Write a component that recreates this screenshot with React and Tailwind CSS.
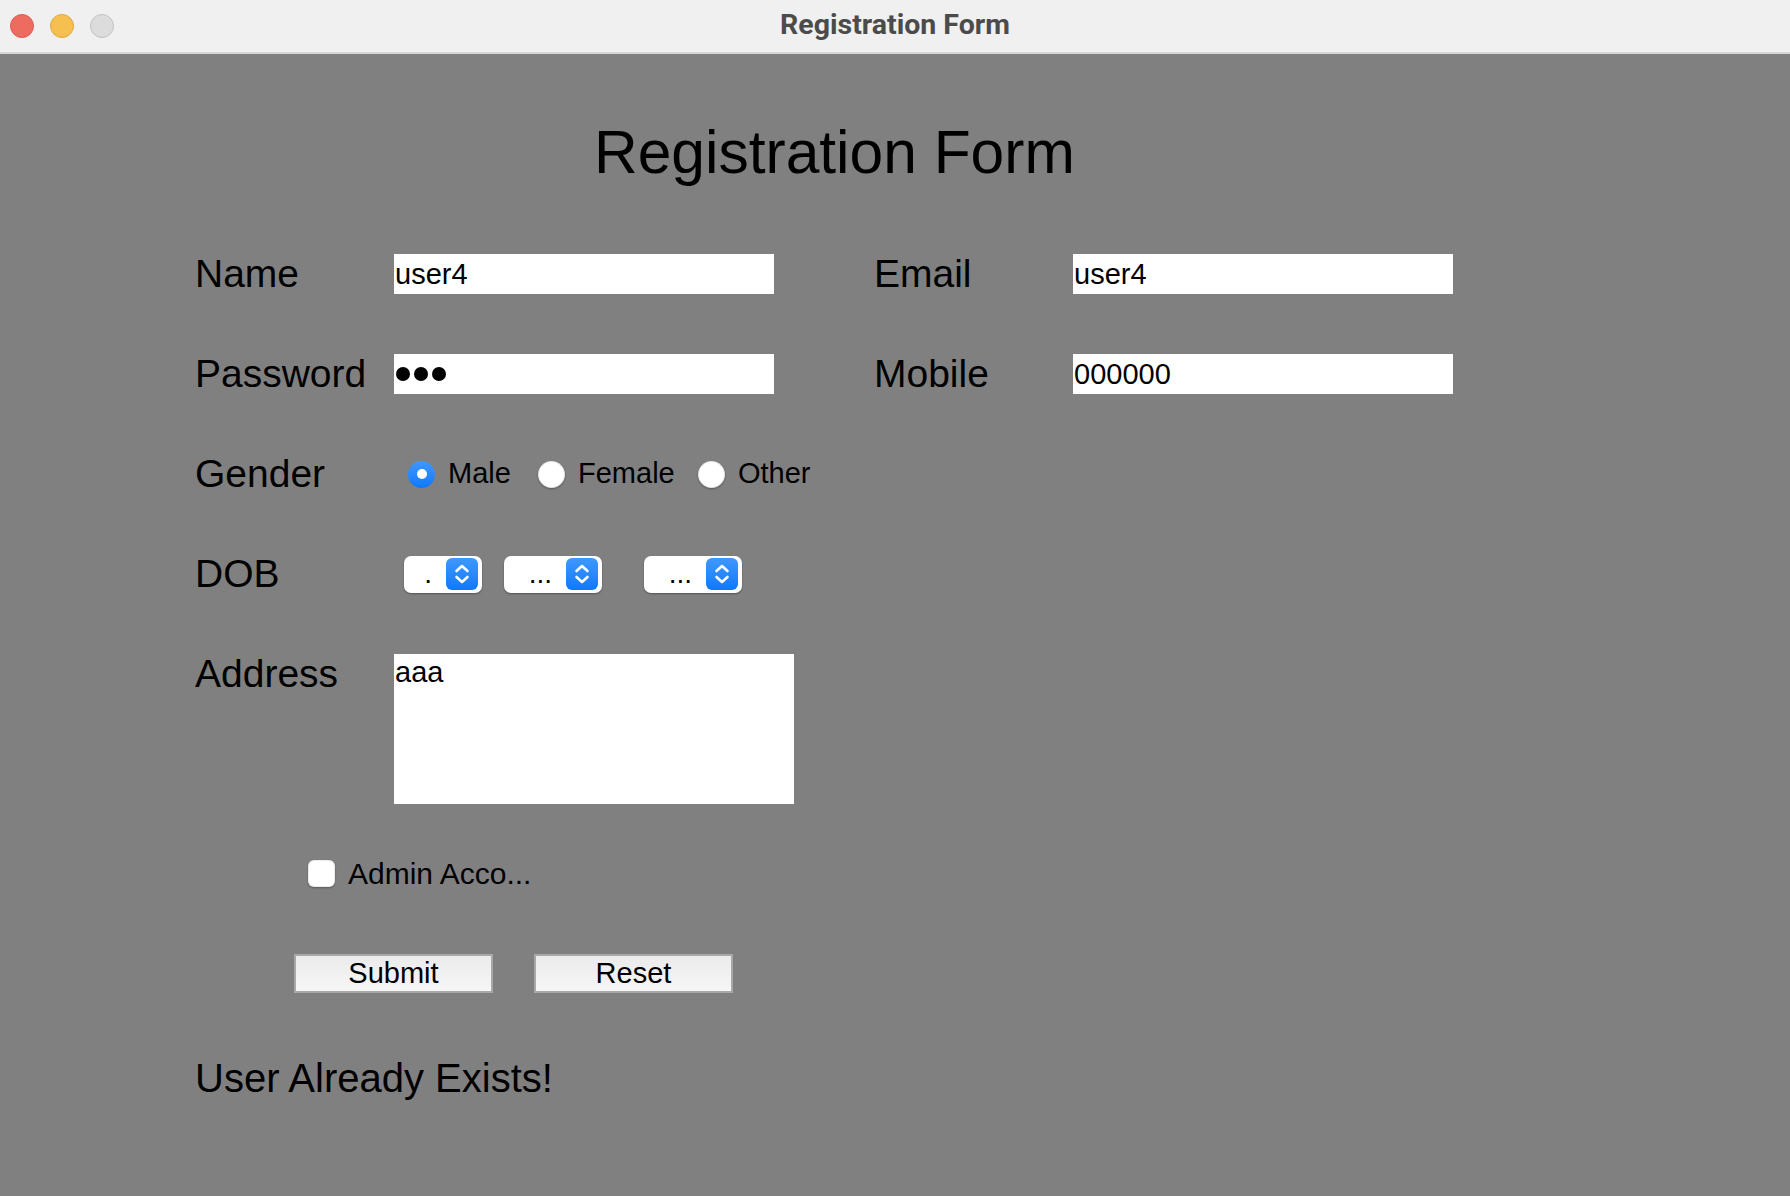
import React from "react";

const Label = ({ children }) => (
  <div className="w-[199px] shrink-0 text-[39px] leading-[40px]">{children}</div>
);

const TextBox = ({ children }) => (
  <div className="flex h-[40px] w-[380px] items-center bg-white pl-[1px] text-[29px] leading-[40px]">
    {children}
  </div>
);

const Radio = ({ checked }) =>
  checked ? (
    <span className="flex h-[27px] w-[27px] items-center justify-center rounded-full bg-linear-to-b from-[#3f98ff] to-[#0a78fd]">
      <span className="h-[10px] w-[10px] rounded-full bg-white" />
    </span>
  ) : (
    <span className="h-[27px] w-[27px] rounded-full bg-white shadow-[inset_0_0_0_1px_rgba(0,0,0,0.1),0_1px_2px_rgba(0,0,0,0.35)]" />
  );

const Stepper = () => (
  <div className="flex h-[32px] w-[32px] items-center justify-center rounded-[6px] bg-linear-to-b from-[#3f98ff] to-[#0b79fd]">
    <svg width="32" height="32" viewBox="0 0 32 32" fill="none">
      <path d="M10.5 13 L16 8 L21.5 13" stroke="white" strokeWidth="2.6" strokeLinecap="round" strokeLinejoin="round" />
      <path d="M10.5 19 L16 24 L21.5 19" stroke="white" strokeWidth="2.6" strokeLinecap="round" strokeLinejoin="round" />
    </svg>
  </div>
);

const Select = ({ width, text }) => (
  <div className={`flex h-[37px] ${width} items-center justify-end rounded-[7px] bg-white pr-[4px] shadow-[0_1px_2px_rgba(0,0,0,0.35)]`}>
    <span className="mr-[14px] text-[28px] leading-none">{text}</span>
    <Stepper />
  </div>
);

export default function App() {
  return (
    <div className="min-h-[1196px] w-full bg-[#808080] font-['Liberation_Sans',Arial,sans-serif] text-black">
      <div className="relative flex h-[54px] items-center justify-center border-b-2 border-[#d6d6d6] bg-[#eff0ef] pb-[2px]">
        <div className="absolute left-[10px] top-[14px] flex gap-[16px]">
          <span className="h-[24px] w-[24px] rounded-full border border-[#de5a50] bg-[#ee6b60]" />
          <span className="h-[24px] w-[24px] rounded-full border border-[#dfa73f] bg-[#f5c050]" />
          <span className="h-[24px] w-[24px] rounded-full border border-[#c2c2c2] bg-[#dcdcdc]" />
        </div>
        <span className="font-['Roboto',sans-serif] text-[28.5px] font-bold text-[#4b4b4b]">Registration Form</span>
      </div>

      <div className="pl-[195px] pt-[68px]">
        <h1 className="ml-[399px] text-[60.5px] leading-[60px]">Registration Form</h1>

        <div className="mt-[72px] flex flex-col gap-[60px]">
          <div className="flex h-[40px] items-center">
            <Label>Name</Label>
            <TextBox>user4</TextBox>
            <div className="w-[100px]" />
            <Label>Email</Label>
            <TextBox>user4</TextBox>
          </div>

          <div className="flex h-[40px] items-center">
            <Label>Password</Label>
            <TextBox>
              <span className="flex gap-[4px] pl-[1px]">
                <span className="h-[14px] w-[14px] rounded-full bg-black" />
                <span className="h-[14px] w-[14px] rounded-full bg-black" />
                <span className="h-[14px] w-[14px] rounded-full bg-black" />
              </span>
            </TextBox>
            <div className="w-[100px]" />
            <Label>Mobile</Label>
            <TextBox>000000</TextBox>
          </div>

          <div className="flex h-[40px] items-center">
            <Label>Gender</Label>
            <div className="ml-[14px] flex items-center text-[29px]">
              <label className="flex w-[130px] items-center gap-[13px]">
                <Radio checked />
                <span>Male</span>
              </label>
              <label className="flex w-[160px] items-center gap-[13px]">
                <Radio />
                <span>Female</span>
              </label>
              <label className="flex items-center gap-[13px]">
                <Radio />
                <span>Other</span>
              </label>
            </div>
          </div>

          <div className="flex h-[40px] items-center">
            <Label>DOB</Label>
            <div className="ml-[10px] flex items-center">
              <Select width="w-[78px]" text="." />
              <div className="w-[22px]" />
              <Select width="w-[98px]" text="..." />
              <div className="w-[42px]" />
              <Select width="w-[98px]" text="..." />
            </div>
          </div>

          <div className="flex items-start">
            <Label>Address</Label>
            <div className="h-[150px] w-[400px] bg-white pl-[1px] pt-[2px] text-[29px] leading-[32px]">aaa</div>
          </div>
        </div>

        <div className="ml-[113px] mt-[56px] flex h-[27px] items-center">
          <span className="h-[27px] w-[27px] rounded-[6px] bg-white shadow-[inset_0_0_0_1px_rgba(0,0,0,0.08),0_1px_2px_rgba(0,0,0,0.3)]" />
          <span className="ml-[13px] text-[30px]">Admin Acco...</span>
        </div>

        <div className="ml-[99px] mt-[67px] flex gap-[41px]">
          <button className="h-[39px] w-[199px] border-2 border-[#a8a8a8] bg-linear-to-b from-[#ebebeb] to-[#f6f6f6] text-[29px] leading-none">
            Submit
          </button>
          <button className="h-[39px] w-[199px] border-2 border-[#a8a8a8] bg-linear-to-b from-[#ebebeb] to-[#f6f6f6] text-[29px] leading-none">
            Reset
          </button>
        </div>

        <div className="mt-[65px] text-[40px] leading-[40px]">User Already Exists!</div>
      </div>
    </div>
  );
}
